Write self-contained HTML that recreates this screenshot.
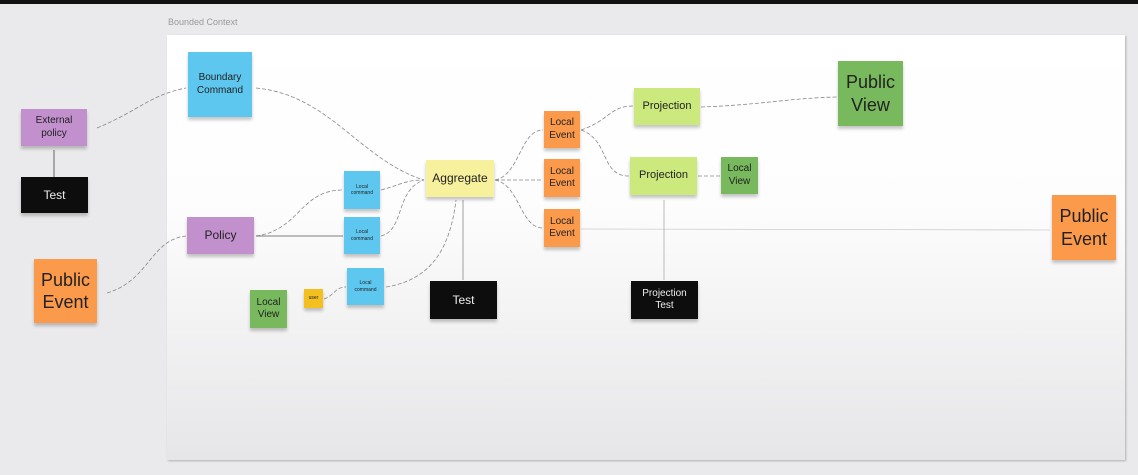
<!DOCTYPE html>
<html><head><meta charset="utf-8"><style>
html,body{margin:0;padding:0}
body{width:1138px;height:475px;position:relative;overflow:hidden;background:#eaeaec;font-family:"Liberation Sans",sans-serif}
.top{position:absolute;left:0;top:0;width:1138px;height:4px;background:#111}
.panel{position:absolute;left:167px;top:35px;width:958px;height:425px;background:linear-gradient(#ffffff 0%,#fdfdfd 40%,#e6e6e8 100%);box-shadow:1px 1px 2px rgba(0,0,0,.25)}
.lbl{position:absolute;left:168px;top:17px;font-size:9px;color:#999}
.n{position:absolute;display:flex;align-items:center;justify-content:center;text-align:center;color:#222;box-shadow:0 3px 3px rgba(0,0,0,.22);line-height:1.25}
.b{background:#5ec7ef}.p{background:#c290cd}.k{background:#0d0d0d;color:#eee}.o{background:#fc9a4c}.g{background:#79b95e}.y{background:#f7f09c}.lg{background:#cbe97d}
svg{position:absolute;left:0;top:0}
</style></head><body>
<div class="top"></div>
<div class="lbl">Bounded Context</div>
<div class="panel"></div>
<svg width="1138" height="475" fill="none" stroke="#888" stroke-width="0.8">
<g stroke-dasharray="4 2">
<path d="M97 128 C140 110 150 95 186 88"/>
<path d="M107 293 C150 280 150 240 186 236"/>
<path d="M256 88 C330 95 360 160 424 180"/>
<path d="M256 236 C300 230 300 190 343 190"/>
<path d="M381 190 C400 185 405 180 424 180"/>
<path d="M381 236 C405 230 395 190 424 180"/>
<path d="M386 287 C430 280 450 250 456 200"/>
<path d="M324 299 C335 295 335 287 346 287"/>
<path d="M495 180 C520 175 520 130 543 130"/>
<path d="M495 180 L543 180"/>
<path d="M495 180 C520 185 520 228 543 228"/>
<path d="M581 130 C610 120 610 106 633 106"/>
<path d="M581 130 C610 140 600 176 629 176"/>
<path d="M701 107 C760 105 790 98 837 97"/>
<path d="M698 176 L720 176"/>
</g>
<path d="M256 236 L343 236" stroke="#555"/>
<path d="M581 229 L1050 230" stroke="#ccc"/>
<path d="M54 177 L54 150" stroke="#444"/>
<path d="M463 280 L463 200" stroke="#888"/>
<path d="M664 280 L664 200" stroke="#aaa"/>
</svg>
<div class="n b" style="left:188px;top:52px;width:64px;height:65px;font-size:10px">Boundary<br>Command</div>
<div class="n p" style="left:21px;top:109px;width:66px;height:37px;font-size:10px">External<br>policy</div>
<div class="n k" style="left:21px;top:177px;width:67px;height:36px;font-size:12px">Test</div>
<div class="n p" style="left:187px;top:217px;width:67px;height:37px;font-size:12px">Policy</div>
<div class="n o" style="left:34px;top:259px;width:63px;height:64px;font-size:18px">Public<br>Event</div>
<div class="n b" style="left:344px;top:171px;width:36px;height:38px;font-size:5px">Local<br>command</div>
<div class="n b" style="left:344px;top:217px;width:36px;height:37px;font-size:5px">Local<br>command</div>
<div class="n b" style="left:347px;top:268px;width:37px;height:37px;font-size:5px">Local<br>command</div>
<div class="n g" style="left:250px;top:290px;width:37px;height:38px;font-size:10px">Local<br>View</div>
<div class="n" style="left:304px;top:289px;width:19px;height:19px;font-size:5px;background:#f4c020">user</div>
<div class="n y" style="left:426px;top:160px;width:68px;height:37px;font-size:12px">Aggregate</div>
<div class="n k" style="left:430px;top:281px;width:67px;height:38px;font-size:12px">Test</div>
<div class="n o" style="left:544px;top:111px;width:36px;height:37px;font-size:10px">Local<br>Event</div>
<div class="n o" style="left:544px;top:159px;width:36px;height:38px;font-size:10px">Local<br>Event</div>
<div class="n o" style="left:544px;top:209px;width:36px;height:38px;font-size:10px">Local<br>Event</div>
<div class="n lg" style="left:634px;top:88px;width:66px;height:37px;font-size:11px">Projection</div>
<div class="n lg" style="left:630px;top:157px;width:67px;height:38px;font-size:11px">Projection</div>
<div class="n g" style="left:721px;top:157px;width:37px;height:37px;font-size:10px">Local<br>View</div>
<div class="n g" style="left:838px;top:61px;width:65px;height:65px;font-size:18px">Public<br>View</div>
<div class="n o" style="left:1052px;top:195px;width:64px;height:65px;font-size:18px">Public<br>Event</div>
<div class="n k" style="left:631px;top:281px;width:67px;height:38px;font-size:10px">Projection<br>Test</div>
</body></html>
